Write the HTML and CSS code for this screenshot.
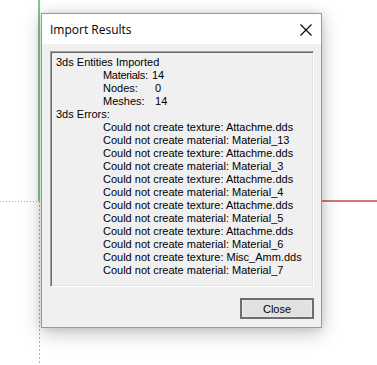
FILE: index.html
```html
<!DOCTYPE html>
<html lang="en">
<head>
  <meta charset="UTF-8" />
  <title>Import Results</title>
  <link rel="stylesheet" href="styles.css">
</head>
<body>

  <div class="axis axis-green"></div>
  <div class="axis axis-green-dots"></div>
  <div class="axis axis-red"></div>
  <div class="axis axis-red-dots"></div>

  <div class="dialog">
    <div class="titlebar">
      <span class="title">Import Results</span>
      <svg class="close-x" width="12" height="12" viewBox="0 0 12 12">
        <path d="M0.5 0.5 L11.5 11.5 M11.5 0.5 L0.5 11.5" stroke="#000" stroke-width="1.1" fill="none"/>
      </svg>
    </div>

    <div class="body">
      <div class="log">
        <div class="line">3ds Entities Imported</div>
        <div class="line sub"><span class="key tight">Materials:</span>14</div>
        <div class="line sub"><span class="key">Nodes:</span>&nbsp;0</div>
        <div class="line sub"><span class="key">Meshes:</span>&nbsp;14</div>
        <div class="line">3ds Errors:</div>
        <div class="line sub">Could not create texture: Attachme.dds</div>
        <div class="line sub">Could not create material: Material_13</div>
        <div class="line sub">Could not create texture: Attachme.dds</div>
        <div class="line sub">Could not create material: Material_3</div>
        <div class="line sub">Could not create texture: Attachme.dds</div>
        <div class="line sub">Could not create material: Material_4</div>
        <div class="line sub">Could not create texture: Attachme.dds</div>
        <div class="line sub">Could not create material: Material_5</div>
        <div class="line sub">Could not create texture: Attachme.dds</div>
        <div class="line sub">Could not create material: Material_6</div>
        <div class="line sub">Could not create texture: Misc_Amm.dds</div>
        <div class="line sub">Could not create material: Material_7</div>
      </div>

      <div class="actions">
        <button class="btn">Close</button>
      </div>
    </div>
  </div>

</body>
</html>
```

FILE: styles.css
```css
html, body {
  margin: 0;
  padding: 0;
}

body {
  background: #ffffff;
  width: 377px;
  height: 365px;
  position: relative;
  overflow: hidden;
  font-family: 'Liberation Sans', Arial, sans-serif;
  padding-top: 13px;
  padding-left: 41px;
  box-sizing: border-box;
}

/* model axes behind the dialog */
.axis {
  position: absolute;
}

.axis-green {
  left: 38px;
  top: 0;
  width: 2px;
  height: 201px;
  background: #82c982;
}

.axis-green-dots {
  left: 39px;
  top: 201px;
  width: 1px;
  height: 164px;
  background: repeating-linear-gradient(to bottom, #8ccc8c 0 2px, transparent 2px 4px);
}

.axis-red {
  left: 322px;
  top: 200px;
  width: 55px;
  height: 2px;
  background: #d07a7a;
}

.axis-red-dots {
  left: 0;
  top: 201px;
  width: 38px;
  height: 1px;
  background: repeating-linear-gradient(to right, #d89a9a 0 1px, transparent 1px 3px);
}

.dialog {
  position: relative;
  width: 281px;
  height: 315px;
  box-sizing: border-box;
  background: #f0f0f0;
  border: 1px solid #7b9ec6;
  box-shadow: 0 5px 18px rgba(0, 0, 0, 0.24), 0 0 8px rgba(0, 0, 0, 0.1);
  display: flex;
  flex-direction: column;
}

.titlebar {
  height: 30px;
  background: #ffffff;
  display: flex;
  align-items: center;
  justify-content: space-between;
  padding: 0 9px 0 8px;
  flex-shrink: 0;
}

.title {
  font-family: 'Open Sans', 'Liberation Sans', sans-serif;
  font-size: 12px;
  color: #000;
  margin-top: 1px;
}

.close-x {
  margin-top: 1px;
}

.body {
  flex: 1;
  padding: 7px 7px 8px 8px;
  display: flex;
  flex-direction: column;
}

.log {
  height: 236px;
  box-sizing: border-box;
  border-top: 1px solid #a0a0a0;
  border-left: 1px solid #a0a0a0;
  border-right: 1px solid #ffffff;
  border-bottom: 1px solid #ffffff;
  box-shadow: inset 1px 1px 0 #696969, inset -1px -1px 0 #e3e3e3;
  padding: 4px 5px;
  font-size: 11px;
  color: #000;
}

.line {
  line-height: 13px;
  height: 13px;
  white-space: nowrap;
}

.line.sub {
  padding-left: 47px;
}

.key {
  display: inline-block;
  width: 49px;
}

.key.tight {
  letter-spacing: -0.3px;
}

.actions {
  display: flex;
  justify-content: flex-end;
  margin-top: 11px;
}

.btn {
  width: 74px;
  height: 21px;
  box-sizing: border-box;
  background: #e1e1e1;
  border: 2px solid #6d6d6d;
  box-shadow: inset 0 0 0 1px #e9e9e9;
  font-family: 'Liberation Sans', Arial, sans-serif;
  font-size: 11px;
  color: #000;
  padding: 0;
}
```
